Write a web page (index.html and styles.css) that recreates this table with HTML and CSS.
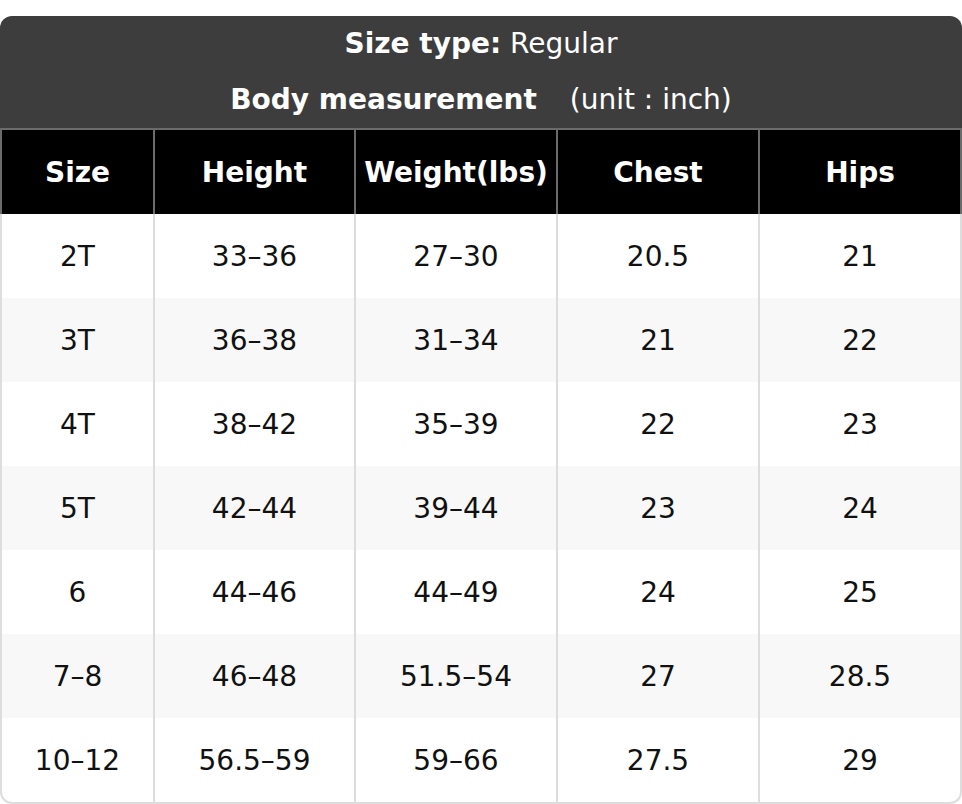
FILE: index.html
```html
<!DOCTYPE html>
<html>
<head>
<meta charset="utf-8">
<link rel="stylesheet" href="styles.css">
</head>
<body>
<div class="chart">
  <div class="title">
    <div class="title-line"><b>Size type:</b> Regular</div>
    <div class="title-line"><b>Body measurement</b><span class="unit">(unit : inch)</span></div>
  </div>
  <div class="head grid">
    <div class="cell">Size</div>
    <div class="cell">Height</div>
    <div class="cell">Weight(lbs)</div>
    <div class="cell">Chest</div>
    <div class="cell">Hips</div>
  </div>
  <div class="body">
    <div class="row grid"><div class="cell">2T</div><div class="cell">33–36</div><div class="cell">27–30</div><div class="cell">20.5</div><div class="cell">21</div></div>
    <div class="row alt grid"><div class="cell">3T</div><div class="cell">36–38</div><div class="cell">31–34</div><div class="cell">21</div><div class="cell">22</div></div>
    <div class="row grid"><div class="cell">4T</div><div class="cell">38–42</div><div class="cell">35–39</div><div class="cell">22</div><div class="cell">23</div></div>
    <div class="row alt grid"><div class="cell">5T</div><div class="cell">42–44</div><div class="cell">39–44</div><div class="cell">23</div><div class="cell">24</div></div>
    <div class="row grid"><div class="cell">6</div><div class="cell">44–46</div><div class="cell">44–49</div><div class="cell">24</div><div class="cell">25</div></div>
    <div class="row alt grid"><div class="cell">7–8</div><div class="cell">46–48</div><div class="cell">51.5–54</div><div class="cell">27</div><div class="cell">28.5</div></div>
    <div class="row grid"><div class="cell">10–12</div><div class="cell">56.5–59</div><div class="cell">59–66</div><div class="cell">27.5</div><div class="cell">29</div></div>
  </div>
</div>
</body>
</html>
```
FILE: styles.css
```css
html, body {
  margin: 0;
  padding: 0;
  background: #ffffff;
}
body {
  font-family: "DejaVu Sans", sans-serif;
  font-size: 28px;
  padding-top: 16px;
}
.chart {
  width: 962px;
}
.title {
  background: #3d3d3d;
  color: #ffffff;
  border-radius: 12px 12px 0 0;
  border-bottom: 2px solid #6b6b6b;
  text-align: center;
  height: 112px;
}
.title-line {
  line-height: 56px;
  height: 56px;
  white-space: nowrap;
}
.unit {
  margin-left: 33px;
}
.grid {
  display: grid;
  grid-template-columns: 151px 199px 200px 200px 200px;
  column-gap: 2px;
}
.head {
  background: #6b6b6b;
  padding: 0 2px;
  height: 84px;
}
.head .cell {
  background: #000000;
  color: #ffffff;
  font-weight: bold;
}
.cell {
  display: flex;
  align-items: center;
  justify-content: center;
  white-space: nowrap;
}
.body {
  border: 2px solid #dddddd;
  border-top: 0;
  border-radius: 0 0 12px 12px;
  overflow: hidden;
  background: #dddddd;
}
.row {
  height: 84px;
}
.row .cell {
  background: #ffffff;
  color: #111111;
}
.row.alt .cell {
  background: #f8f8f8;
}
```
